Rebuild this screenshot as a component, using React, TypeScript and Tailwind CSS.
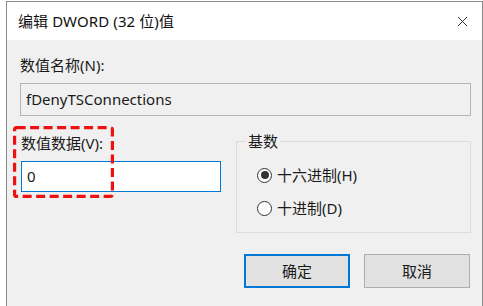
import { X } from "lucide-react";

const font = { fontFamily: '"Noto Sans", "Noto Sans CJK SC", sans-serif' };

function Radio({ checked, label }: { checked?: boolean; label: string }) {
  return (
    <div className="flex items-center gap-[5px] h-[20px]">
      <span className="w-[15px] h-[15px] rounded-full border border-[#333] bg-white flex items-center justify-center">
        {checked && <span className="w-[8px] h-[8px] rounded-full bg-[#333]" />}
      </span>
      <span className="text-[15px] text-[#1a1a1a] leading-[20px]">{label}</span>
    </div>
  );
}

export default function App() {
  return (
    <div className="w-[483px] h-[306px] bg-white overflow-hidden" style={font}>
      <div className="ml-[6px] mt-[1px] w-[477px] h-[320px] border border-[#8a8a8a] flex flex-col">
        {/* title bar */}
        <div className="h-[38px] bg-white flex items-center justify-between pl-[11px] pr-[11px]">
          <span className="text-[15px] text-[#111] tracking-[0.1px]">编辑 DWORD (32 位)值</span>
          <X className="w-[17px] h-[17px] text-[#222]" strokeWidth={1.3} />
        </div>

        {/* body */}
        <div className="flex-1 bg-[#f0f0f0] pl-[13px] pr-[11px] pt-[15px] text-[#1a1a1a] text-[15px]">
          <div className="leading-[20px]">数值名称(N):</div>
          <div className="mt-[8px] h-[33px] border border-[#b4b4b4] bg-[#f0f0f0] flex items-center px-[5px]">
            fDenyTSConnections
          </div>

          <div className="mt-[17px] flex gap-[15px]">
            <div className="relative w-[201px] pl-[1px]">
              <div className="leading-[20px]">数值数据(V):</div>
              <div className="mt-[8px] h-[31px] border border-[#0078d7] bg-white flex items-center px-[5px]">
                0
              </div>
              <svg
                className="absolute left-[-7px] top-[-7px]"
                width="101"
                height="72"
                viewBox="0 0 101 72"
              >
                <rect
                  x="1.6"
                  y="1.6"
                  width="97.8"
                  height="68.8"
                  rx="2"
                  fill="none"
                  stroke="#ee1111"
                  strokeWidth="3.2"
                  strokeDasharray="9 4.5"
                />
              </svg>
            </div>

            <fieldset className="mt-[-2px] w-[235px] h-[102px] border border-[#dcdcdc] pl-[20px] pt-[14px] flex flex-col gap-[13px]">
              <legend className="ml-[-11px] px-[2px] leading-[20px]">基数</legend>
              <Radio checked label="十六进制(H)" />
              <Radio label="十进制(D)" />
            </fieldset>
          </div>

          <div className="mt-[21px] flex justify-end gap-[14px] pr-[1px]">
            <button className="w-[106px] h-[34px] bg-[#e1e1e1] border-2 border-[#0078d7]">
              确定
            </button>
            <button className="w-[106px] h-[34px] bg-[#e1e1e1] border border-[#adadad]">
              取消
            </button>
          </div>
        </div>
      </div>
    </div>
  );
}
